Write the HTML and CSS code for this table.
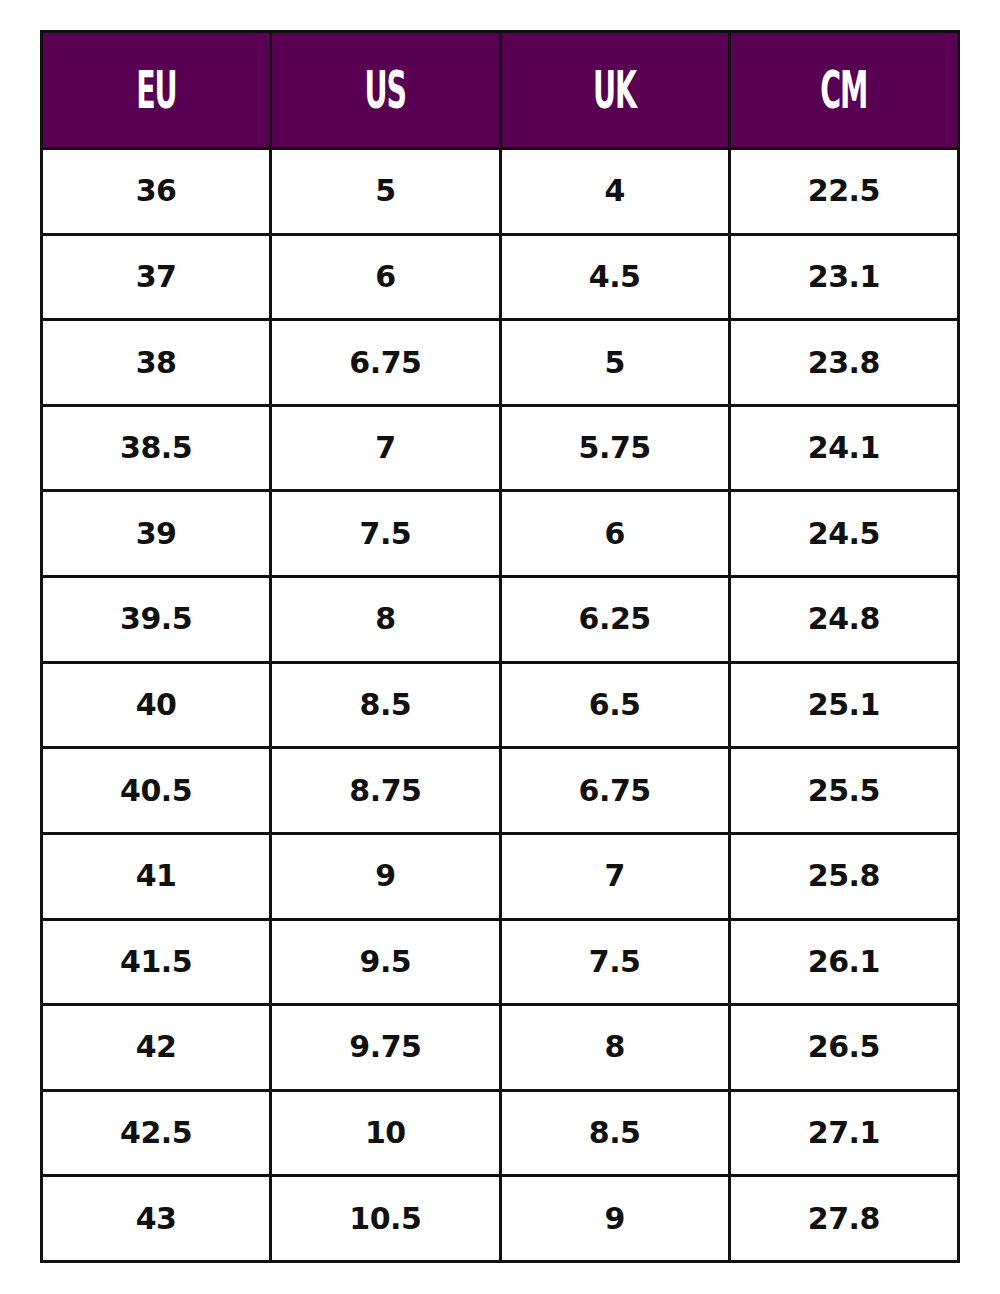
FILE: index.html
```html
<!DOCTYPE html>
<html>
<head>
<meta charset="utf-8">
<link rel="stylesheet" href="styles.css">
</head>
<body>
<div class="chart">
  <div class="head"><span>EU</span></div>
  <div class="head"><span>US</span></div>
  <div class="head"><span>UK</span></div>
  <div class="head"><span>CM</span></div>
  <div class="cell">36</div><div class="cell">5</div><div class="cell">4</div><div class="cell">22.5</div>
  <div class="cell">37</div><div class="cell">6</div><div class="cell">4.5</div><div class="cell">23.1</div>
  <div class="cell">38</div><div class="cell">6.75</div><div class="cell">5</div><div class="cell">23.8</div>
  <div class="cell">38.5</div><div class="cell">7</div><div class="cell">5.75</div><div class="cell">24.1</div>
  <div class="cell">39</div><div class="cell">7.5</div><div class="cell">6</div><div class="cell">24.5</div>
  <div class="cell">39.5</div><div class="cell">8</div><div class="cell">6.25</div><div class="cell">24.8</div>
  <div class="cell">40</div><div class="cell">8.5</div><div class="cell">6.5</div><div class="cell">25.1</div>
  <div class="cell">40.5</div><div class="cell">8.75</div><div class="cell">6.75</div><div class="cell">25.5</div>
  <div class="cell">41</div><div class="cell">9</div><div class="cell">7</div><div class="cell">25.8</div>
  <div class="cell">41.5</div><div class="cell">9.5</div><div class="cell">7.5</div><div class="cell">26.1</div>
  <div class="cell">42</div><div class="cell">9.75</div><div class="cell">8</div><div class="cell">26.5</div>
  <div class="cell">42.5</div><div class="cell">10</div><div class="cell">8.5</div><div class="cell">27.1</div>
  <div class="cell">43</div><div class="cell">10.5</div><div class="cell">9</div><div class="cell">27.8</div>
</div>
</body>
</html>
```
FILE: styles.css
```css
html, body {
  margin: 0;
  padding: 0;
  background: #ffffff;
}
body {
  padding: 30px 40px 32px 40px;
}
.chart {
  width: 920px;
  height: 1233px;
  box-sizing: border-box;
  border: 3px solid #111111;
  background: #111111;
  display: grid;
  grid-template-columns: repeat(4, 1fr);
  grid-template-rows: 114px repeat(13, 1fr);
  gap: 3px;
}
.head {
  background: #580051;
  color: #ffffff;
  display: flex;
  align-items: center;
  justify-content: center;
}
.head span {
  display: inline-block;
  font-family: "DejaVu Sans Condensed", "DejaVu Sans", sans-serif;
  font-weight: bold;
  font-size: 51px;
  line-height: 1;
  transform: scaleX(0.62);
  letter-spacing: -2px;
}
.cell {
  background: #ffffff;
  color: #111111;
  display: flex;
  align-items: center;
  justify-content: center;
  font-family: "DejaVu Sans", sans-serif;
  font-weight: bold;
  font-size: 30px;
  line-height: 1;
  letter-spacing: -0.5px;
}
```
